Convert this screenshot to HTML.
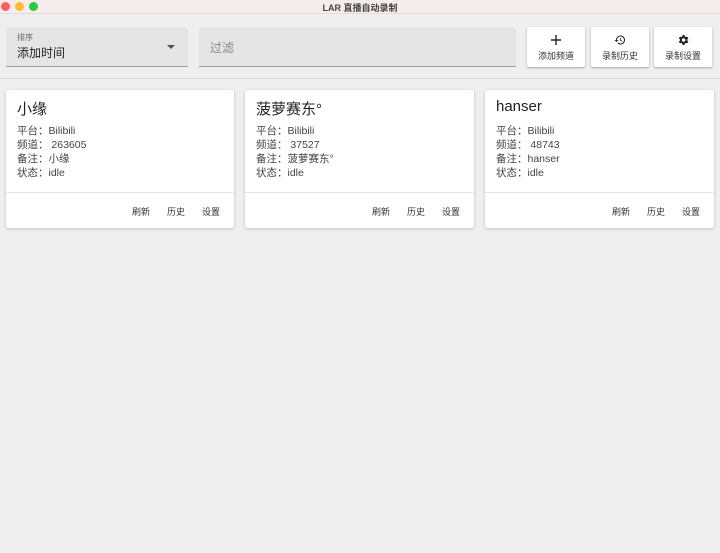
<!DOCTYPE html>
<html><head><meta charset="utf-8"><style>
*{box-sizing:border-box;margin:0;padding:0}
body{width:720px;height:553px;background:#efefef;font-family:"Liberation Sans","Noto Sans CJK SC",sans-serif;position:relative;overflow:hidden;color:#222}
.tb{position:absolute;left:0;top:0;width:720px;height:14px;background:#f6eced;border-bottom:1px solid #e6dada}
.tb .t{position:absolute;left:0;right:0;top:1px;text-align:center;font-size:9px;font-weight:bold;color:#444}
.d{position:absolute;top:2px;width:9px;height:9px;border-radius:50%}
.hdr{position:absolute;left:0;top:14px;width:720px;height:65px;border-bottom:1px solid #dcdcdc}
.f{position:absolute;top:13px;height:40px;background:#e5e5e5;border-bottom:1px solid #9a9a9a;border-radius:3px 3px 0 0}
.btn{position:absolute;top:13px;height:40px;width:58px;background:#fff;border-radius:2px;box-shadow:0 1px 2px rgba(0,0,0,.3);text-align:center;font-size:9px;color:#333}
.btn svg{display:block;margin:7px auto 3px;width:12px;height:12px}
.card{position:absolute;top:90px;height:138px;background:#fff;border-radius:3px;box-shadow:0 1px 3px rgba(0,0,0,.2)}
.card h3{position:absolute;left:11px;top:8px;font-size:15px;font-weight:normal;color:#222}
.card .i{position:absolute;left:11px;top:34px;font-size:10.5px;line-height:14px;color:#444}
.card .hr{position:absolute;left:0;right:0;top:102px;border-top:1px solid #e4e4e4}
.card .a{position:absolute;right:14px;top:115px;font-size:9px;color:#333}
.card .a span{margin-left:17px}
</style></head><body>
<div class="tb"><div class="d" style="left:1px;background:#fe5f57"></div><div class="d" style="left:15px;background:#febc2e"></div><div class="d" style="left:29px;background:#28c840"></div><div class="t">LAR 直播自动录制</div></div>
<div class="hdr">
<div class="f" style="left:6px;width:182px"><div style="position:absolute;left:11px;top:5px;font-size:8px;color:#666">排序</div><div style="position:absolute;left:11px;top:17px;font-size:12px;color:#222">添加时间</div><div style="position:absolute;left:161px;top:18px;width:0;height:0;border-left:4px solid transparent;border-right:4px solid transparent;border-top:4px solid #555"></div></div>
<div class="f" style="left:199px;width:317px"><div style="position:absolute;left:11px;top:12px;font-size:12px;color:#888">过滤</div></div>
<div class="btn" style="left:527px"><svg viewBox="0 0 12 12"><path d="M6 1v10M1 6h10" stroke="#222" stroke-width="1.4"/></svg>添加频道</div>
<div class="btn" style="left:591px"><svg viewBox="0 0 24 24"><path d="M13 3a9 9 0 0 0-9 9H1l4 4 4-4H6a7 7 0 1 1 2.1 5l-1.4 1.4A9 9 0 1 0 13 3zm-1 5v5l4.3 2.5.7-1.2-3.5-2.1V8z" fill="#222"/></svg>录制历史</div>
<div class="btn" style="left:654px"><svg viewBox="0 0 24 24"><path d="M20.4 13.2a8.500 8.500 0 0 0 0-2.4l2.300-1.800-2.200-3.800-2.700 1.100a8 8 0 0 0-2-1.200L15.400 2.200h-4.400l-.4 2.900a8 8 0 0 0-2 1.200L5.900 5.200 3.700 9l2.300 1.800a8.500 8.500 0 0 0 0 2.400L3.700 15l2.200 3.800 2.700-1.100a8 8 0 0 0 2 1.200l.4 2.900h4.400l.4-2.900a8 8 0 0 0 2-1.200l2.700 1.100 2.200-3.800zM13.200 15.500a3.500 3.500 0 1 1 0-7 3.500 3.500 0 0 1 0 7z" fill="#222"/></svg>录制设置</div>
</div>
<div class="card" style="left:6px;width:228px"><h3>小缘</h3><div class="i">平台：Bilibili<br>频道：&nbsp;263605<br>备注：小缘<br>状态：idle</div><div class="hr"></div><div class="a">刷新<span>历史</span><span>设置</span></div></div>
<div class="card" style="left:245px;width:229px"><h3>菠萝赛东°</h3><div class="i">平台：Bilibili<br>频道：&nbsp;37527<br>备注：菠萝赛东°<br>状态：idle</div><div class="hr"></div><div class="a">刷新<span>历史</span><span>设置</span></div></div>
<div class="card" style="left:485px;width:229px"><h3>hanser</h3><div class="i">平台：Bilibili<br>频道：&nbsp;48743<br>备注：hanser<br>状态：idle</div><div class="hr"></div><div class="a">刷新<span>历史</span><span>设置</span></div></div>
</body></html>
